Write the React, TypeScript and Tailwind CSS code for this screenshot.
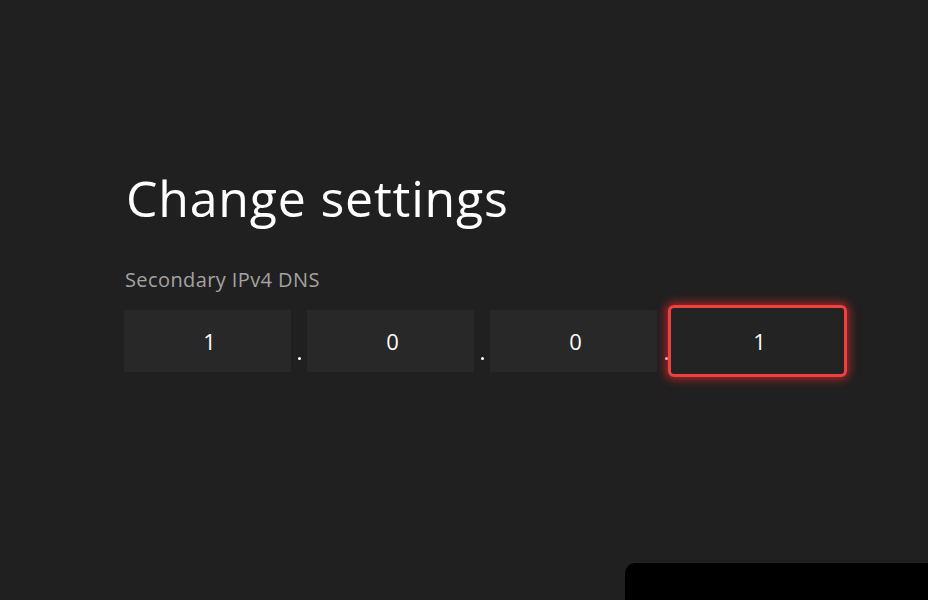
const octets = ['1', '0', '0']

function Dot() {
  return <span className="block w-[3px] h-[3px] rounded-full bg-white" />
}

export default function App() {
  return (
    <div className="relative w-[928px] h-[600px] overflow-hidden bg-[#202020] font-['Open_Sans',sans-serif]">
      <div className="pl-[124px] pt-[168px]">
        <h1 className="text-[50px] leading-[60px] text-white tracking-[0.8px] pl-[2px]">Change settings</h1>
        <p className="mt-[40px] text-[20px] leading-[24px] text-[#a3a3a3] tracking-[0.4px] pl-[1px]">Secondary IPv4 DNS</p>

        {/* address fields */}
        <div className="mt-[13px] flex items-center h-[72px]">
          {octets.map((v, i) => (
            <div key={i} className="flex items-center">
              <div className="w-[167px] h-[62px] bg-[#282828] flex items-center justify-center text-white text-[22px] pl-[4px]">
                {v}
              </div>
              <div className={`${i < 2 ? 'w-[16px] justify-center' : 'w-[11px] justify-end'} h-[62px] flex items-end pb-[12px]`}>
                <Dot />
              </div>
            </div>
          ))}
          <div className="w-[179px] h-[72px] rounded-[6px] border-[3px] border-[#f0403f] bg-[#232323] shadow-[0_0_9px_3px_rgba(235,40,40,0.6)] flex items-center justify-center text-white text-[22px] pl-[4px]">
            1
          </div>
        </div>
      </div>

      <div className="absolute left-[625px] top-[563px] right-0 bottom-0 bg-black rounded-tl-[10px]" />
    </div>
  )
}
